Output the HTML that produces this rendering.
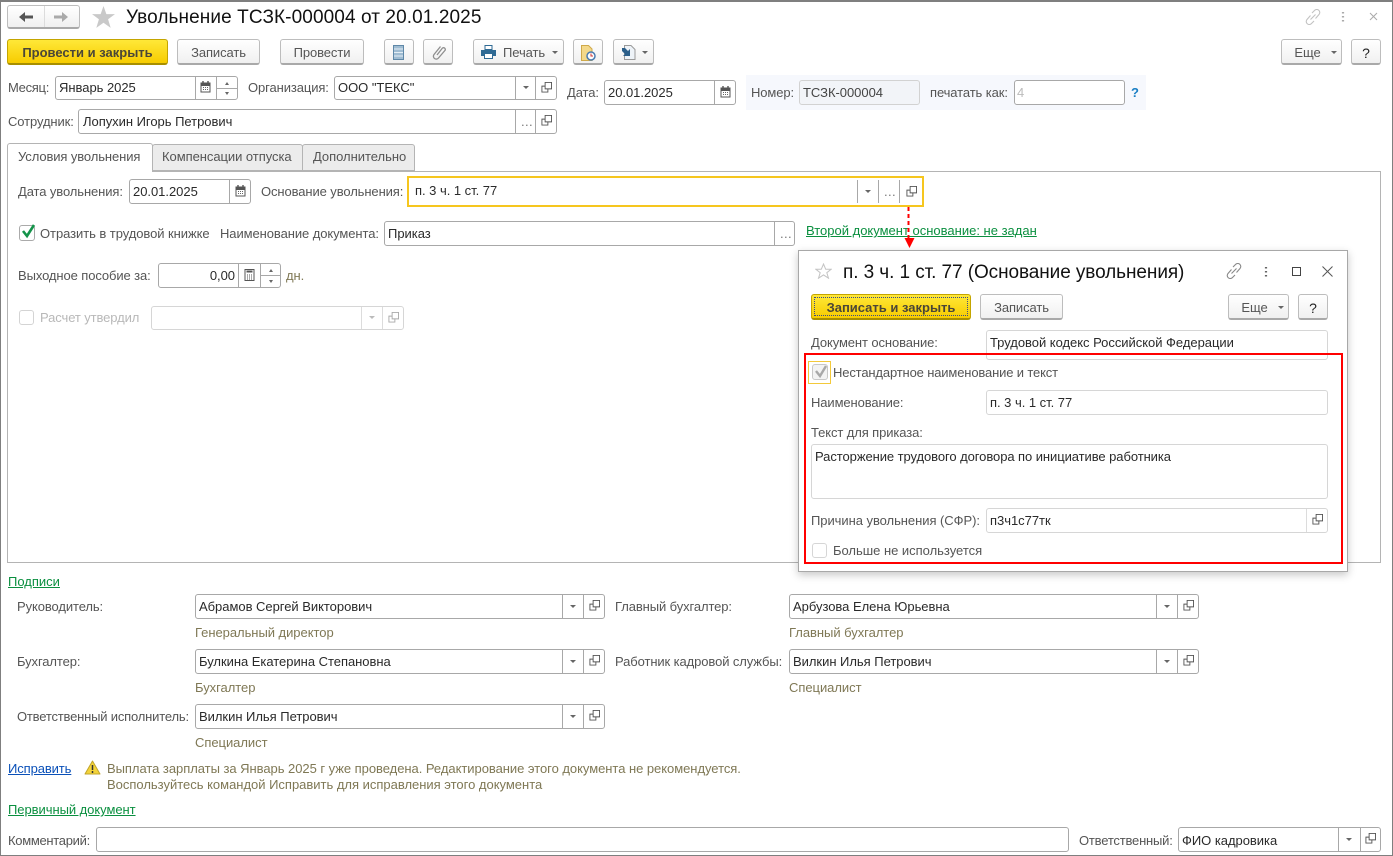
<!DOCTYPE html>
<html lang="ru"><head><meta charset="utf-8"><title>Увольнение ТСЗК-000004</title>
<style>
html,body{margin:0;padding:0;background:#fff}
#p{position:relative;width:1393px;height:856px;overflow:hidden;background:#fff;font:13px/16px "Liberation Sans","Noto Sans CJK SC",sans-serif;color:#333}
#p div,#p span,#p svg{position:absolute;box-sizing:border-box}
.t{white-space:nowrap;color:#555;margin-top:1px;letter-spacing:-.1px}
.x{white-space:nowrap;color:#2a2a2a;margin-top:1px;letter-spacing:-.03px}
.o{white-space:nowrap;color:#7f7855;margin-top:1px;letter-spacing:-.04px}
.g{white-space:nowrap;color:#0a8f3f;text-decoration:underline;margin-top:1px}
.f{background:#fff;border:1px solid #a8a8a8;border-radius:3px}
.r{background:#fff;border:1px solid #d6d6d6;border-radius:3px}
.v{width:1px;background:#a8a8a8}
.l{width:1px;background:#dcdcdc}
.a{width:0;height:0;margin-left:.5px;border-left:3px solid transparent;border-right:3px solid transparent;border-top:3px solid #666}
.s{border-left-width:2.5px;border-right-width:2.5px;border-top-width:3px}
.b{background:linear-gradient(#fff,#f0f0f0);border:1px solid #bdbdbd;border-bottom:2px solid #a9a9a9;border-radius:3px;text-align:center;color:#555;line-height:26px;white-space:nowrap;letter-spacing:-.1px}
.y{background:linear-gradient(#ffe838,#f7cc00);border:1px solid #c4a500;border-bottom:2px solid #a88f00;border-radius:3px;text-align:center;color:#4a4638;font-weight:bold;line-height:26px;white-space:nowrap}
.c{background:#fff;border:1px solid #c8c8c8;border-radius:3px}
.e{color:#777;letter-spacing:.4px}
</style></head><body><div id="p">
<svg width="0" height="0" style="left:0;top:0"><defs>
<symbol id="op" viewBox="0 0 12 12"><path d="M4.500.5h7v7h-7z" fill="none" stroke="#555"/><path d="M4.500 4.500h-3.500v6.500h6.500v-3.500" fill="none" stroke="#555"/></symbol>
<symbol id="cal" viewBox="0 0 11 12"><path d="M1 2h9v9H1z" fill="#fff" stroke="#555"/><path d="M1 2h9v3H1z" fill="#555"/><path d="M3 0v2M8 0v2" stroke="#555" stroke-width="1.4"/><path d="M3 6.500h1M5 6.500h1M7 6.500h1M3 8.500h1M5 8.500h1M7 8.500h1" stroke="#666"/></symbol>
<symbol id="calc" viewBox="0 0 11 12"><path d="M1 .5h9v11H1z" fill="#fff" stroke="#555"/><path d="M2.500 2.500h6" stroke="#555" stroke-width="2"/><path d="M3 6h1M5 6h1M7 6h1M3 8h1M5 8h1M7 8h1M3 10h1M5 10h1M7 10h1" stroke="#555"/></symbol>
<symbol id="star" viewBox="0 0 24 23"><path d="M12 0l3 8.500h9l-7.200 5.400 2.700 9L12 17.500 4.500 22.900l2.700-9L0 8.500h9z"/></symbol>
<symbol id="link" viewBox="0 0 16 16"><path d="M7 4l2.500-2.500a2.800 2.800 0 0 1 4.500 4L10.500 9.500M9 12l-2.500 2.500a2.800 2.800 0 0 1-4.500-4L5.500 6.500M5.500 10.500l5-5" fill="none" stroke="currentColor" stroke-width="1.100"/></symbol>
</defs></svg>

<!-- window frame -->
<div style="left:0;top:0;width:1393px;height:856px;border:1px solid #7f7f7f;border-width:2px 1px 1px 1px"></div>

<!-- header -->
<div class="b" style="left:7px;top:5px;width:73px;height:24px"></div>
<div class="l" style="left:44px;top:6px;height:21px"></div>
<svg style="left:19px;top:11px" width="15" height="12"><path d="M0 6l6-5v3.500h8v3H6V11z" fill="#555"/></svg>
<svg style="left:54px;top:11px" width="15" height="12"><path d="M14 6L8 1v3.500H0v3h8V11z" fill="#aaa"/></svg>
<svg style="left:92px;top:6px;color:#c9c9c9;fill:#c9c9c9" width="23" height="22"><use href="#star"/></svg>
<div class="x" style="left:126px;top:7px;margin-top:0;font-size:19px;line-height:22px;color:#111;letter-spacing:.1px">Увольнение ТСЗК-000004 от 20.01.2025</div>
<svg style="left:1305px;top:9px;color:#c2c2c2" width="16" height="16"><use href="#link"/></svg>
<svg style="left:1341px;top:11px" width="4" height="12"><path d="M2 1v1.500M2 5v1.500M2 9v1.500" stroke="#aaa" stroke-width="2.200"/></svg>
<svg style="left:1369px;top:12px" width="9" height="9"><path d="M1 1l7 7M8 1l-7 7" stroke="#aaa"/></svg>

<!-- command bar -->
<div class="y" style="left:7px;top:39px;width:161px;height:26px">Провести и закрыть</div>
<div class="b" style="left:177px;top:39px;width:83px;height:26px">Записать</div>
<div class="b" style="left:280px;top:39px;width:84px;height:26px">Провести</div>
<div class="b" style="left:384px;top:39px;width:30px;height:26px"></div>
<svg style="left:393px;top:45px" width="11" height="15"><path d="M.5.500h10v14H.500z" fill="#9fbcd2" stroke="#5f88a8"/><path d="M1 4h9M1 7.500h9M1 11h9" stroke="#e4eef5"/></svg>
<div class="b" style="left:423px;top:39px;width:30px;height:26px"></div>
<svg style="left:432px;top:45px" width="14" height="15"><path d="M5 10L10.500 3a1.800 1.800 0 0 1 2.600 2.300L6.500 13a2.800 2.800 0 0 1-4.500-3.500L8.500 1.500" fill="none" stroke="#8f8f8f" stroke-width="1.300"/></svg>
<div class="b" style="left:473px;top:39px;width:91px;height:26px;text-align:left;padding-left:29px">Печать</div>
<svg style="left:481px;top:45px" width="15" height="14"><path d="M4 .5h7v4H4z" fill="#fff" stroke="#2f6a94"/><path d="M0 5h15v6H0z" fill="#2f6a94"/><path d="M3.500 8.500h8v5h-8z" fill="#fff" stroke="#2f6a94"/></svg>
<div class="a" style="left:551px;top:51px"></div>
<div class="b" style="left:573px;top:39px;width:30px;height:26px"></div>
<svg style="left:581px;top:45px" width="15" height="16"><path d="M.5.500h7l3.500 3.500v11.500H.500z" fill="#f4d98a" stroke="#cfa94a"/><circle cx="10" cy="11" r="4" fill="#fff" stroke="#4a7bb0" stroke-width="1.500"/><path d="M10 8.500V11h2" stroke="#c33" fill="none"/></svg>
<div class="b" style="left:613px;top:39px;width:41px;height:26px"></div>
<svg style="left:621px;top:45px" width="15" height="15"><path d="M3.500.500h6.500l4 4v10h-10.500z" fill="#eef3f8" stroke="#9a9a9a"/><path d="M1 3h3l3 3 2-2v7H2l2-2-3-3z" fill="#2b5f8a"/></svg>
<div class="a" style="left:641px;top:51px"></div>
<div class="b" style="left:1281px;top:39px;width:61px;height:26px;padding-right:8px">Еще</div>
<div class="a" style="left:1330px;top:51px"></div>
<div class="b" style="left:1351px;top:39px;width:30px;height:26px;color:#222;font-size:14px">?</div>

<!-- row: month -->
<div class="t" style="left:8px;top:79px;letter-spacing:-.3px">Месяц:</div>
<div class="f" style="left:55px;top:76px;width:183px;height:24px"></div>
<div class="x" style="left:59px;top:79px">Январь 2025</div>
<div class="v" style="left:195px;top:77px;height:22px"></div><div class="v" style="left:216px;top:77px;height:22px"></div>
<svg style="left:200px;top:81px" width="11" height="12"><use href="#cal"/></svg>
<div style="left:217px;top:88px;width:20px;height:1px;background:#a8a8a8"></div>
<div class="a s" style="left:224px;top:82px;transform:scaleY(-1)"></div>
<div class="a s" style="left:224px;top:92px"></div>
<div class="t" style="left:248px;top:79px">Организация:</div>
<div class="f" style="left:334px;top:76px;width:223px;height:24px"></div>
<div class="x" style="left:338px;top:79px">ООО "ТЕКС"</div>
<div class="v" style="left:515px;top:77px;height:22px"></div><div class="v" style="left:535px;top:77px;height:22px"></div>
<div class="a" style="left:522px;top:86px"></div>
<svg style="left:541px;top:82px" width="11" height="11"><use href="#op"/></svg>
<div class="t" style="left:567px;top:84px">Дата:</div>
<div class="f" style="left:604px;top:80px;width:132px;height:25px"></div>
<div class="x" style="left:608px;top:84px">20.01.2025</div>
<div class="v" style="left:714px;top:81px;height:23px"></div>
<svg style="left:720px;top:86px" width="11" height="12"><use href="#cal"/></svg>
<div style="left:746px;top:75px;width:400px;height:35px;background:#f6f8fd"></div>
<div class="t" style="left:751px;top:84px">Номер:</div>
<div style="left:799px;top:80px;width:121px;height:25px;background:#f2f4f8;border:1px solid #d2d2d2;border-radius:3px"></div>
<div class="x" style="left:803px;top:84px;color:#444">ТСЗК-000004</div>
<div class="t" style="left:930px;top:84px">печатать как:</div>
<div class="f" style="left:1014px;top:80px;width:111px;height:25px"></div>
<div class="x" style="left:1017px;top:84px;color:#bbb">4</div>
<div class="x" style="left:1131px;top:84px;color:#1a7fc4;font-weight:bold">?</div>

<div class="t" style="left:8px;top:113px">Сотрудник:</div>
<div class="f" style="left:78px;top:109px;width:479px;height:25px"></div>
<div class="x" style="left:83px;top:113px">Лопухин Игорь Петрович</div>
<div class="v" style="left:515px;top:110px;height:23px"></div><div class="v" style="left:535px;top:110px;height:23px"></div>
<div class="t e" style="left:521px;top:113px">...</div>
<svg style="left:541px;top:115px" width="11" height="11"><use href="#op"/></svg>

<!-- tabs & panel -->
<div style="left:7px;top:171px;width:1374px;height:392px;border:1px solid #b4b4b4"></div>
<div style="left:152px;top:144px;width:151px;height:27px;background:#ececec;border:1px solid #b4b4b4;border-radius:3px 3px 0 0"></div>
<div style="left:302px;top:144px;width:113px;height:27px;background:#ececec;border:1px solid #b4b4b4;border-radius:3px 3px 0 0"></div>
<div style="left:7px;top:143px;width:146px;height:29px;background:#fff;border:1px solid #b4b4b4;border-bottom:0;border-radius:3px 3px 0 0"></div>
<div class="t" style="left:18px;top:148px">Условия увольнения</div>
<div class="t" style="left:162px;top:148px;letter-spacing:-.05px">Компенсации отпуска</div>
<div class="t" style="left:313px;top:148px;letter-spacing:-.03px">Дополнительно</div>

<div class="t" style="left:18px;top:183px">Дата увольнения:</div>
<div class="f" style="left:129px;top:179px;width:122px;height:25px"></div>
<div class="x" style="left:133px;top:183px">20.01.2025</div>
<div class="v" style="left:229px;top:180px;height:23px"></div>
<svg style="left:235px;top:185px" width="11" height="12"><use href="#cal"/></svg>
<div class="t" style="left:261px;top:183px">Основание увольнения:</div>
<div style="left:407px;top:176px;width:517px;height:31px;border:2px solid #f6c61e;background:#fff"></div>
<div class="x" style="left:415px;top:182px">п. 3 ч. 1 ст. 77</div>
<div class="v" style="left:857px;top:180px;height:23px"></div><div class="v" style="left:878px;top:180px;height:23px"></div><div class="v" style="left:899px;top:180px;height:23px"></div>
<div class="a" style="left:864px;top:190px"></div>
<div class="t e" style="left:884px;top:183px">...</div>
<svg style="left:906px;top:186px" width="11" height="11"><use href="#op"/></svg>

<div class="c" style="left:19px;top:225px;width:16px;height:16px;border-color:#aaa"></div>
<svg style="left:20px;top:224px" width="16" height="15"><path d="M3 7l4 5 7-11" fill="none" stroke="#14934a" stroke-width="2.600"/></svg>
<div class="t" style="left:40px;top:225px;letter-spacing:-.06px">Отразить в трудовой книжке</div>
<div class="t" style="left:220px;top:225px;letter-spacing:-.08px">Наименование документа:</div>
<div class="f" style="left:384px;top:221px;width:411px;height:25px"></div>
<div class="x" style="left:388px;top:225px">Приказ</div>
<div class="v" style="left:774px;top:222px;height:23px"></div>
<div class="t e" style="left:780px;top:225px">...</div>
<div class="g" style="left:806px;top:222px">Второй документ основание: не задан</div>

<div class="t" style="left:18px;top:268px;margin-top:0">Выходное пособие за:</div>
<div class="f" style="left:158px;top:263px;width:123px;height:25px"></div>
<div class="x" style="left:170px;top:268px;width:65px;text-align:right;margin-top:0">0,00</div>
<div class="v" style="left:238px;top:264px;height:23px"></div><div class="v" style="left:260px;top:264px;height:23px"></div>
<svg style="left:244px;top:269px" width="11" height="12"><use href="#calc"/></svg>
<div style="left:261px;top:275px;width:19px;height:1px;background:#a8a8a8"></div>
<div class="a s" style="left:268px;top:269px;transform:scaleY(-1)"></div>
<div class="a s" style="left:268px;top:280px"></div>
<div class="o" style="left:286px;top:268px;margin-top:0">дн.</div>

<div class="c" style="left:19px;top:310px;width:15px;height:15px;border-color:#d4d4d4"></div>
<div class="t" style="left:40px;top:310px;color:#b8b8b8;margin-top:0">Расчет утвердил</div>
<div class="r" style="left:151px;top:306px;width:253px;height:24px"></div>
<div class="l" style="left:361px;top:307px;height:22px"></div><div class="l" style="left:382px;top:307px;height:22px"></div>
<div class="a" style="left:368px;top:316px;border-top-color:#bbb"></div>
<svg style="left:388px;top:312px;opacity:.5" width="11" height="11"><use href="#op"/></svg>

<!-- bottom -->
<div class="g" style="left:8px;top:573px">Подписи</div>
<div class="t" style="left:17px;top:598px">Руководитель:</div>
<div class="f" style="left:195px;top:594px;width:410px;height:25px"></div>
<div class="x" style="left:199px;top:598px">Абрамов Сергей Викторович</div>
<div class="v" style="left:562px;top:595px;height:23px"></div><div class="v" style="left:583px;top:595px;height:23px"></div>
<div class="a" style="left:569px;top:605px"></div>
<svg style="left:589px;top:600px" width="11" height="11"><use href="#op"/></svg>
<div class="o" style="left:195px;top:624px">Генеральный директор</div>

<div class="t" style="left:17px;top:653px">Бухгалтер:</div>
<div class="f" style="left:195px;top:649px;width:410px;height:25px"></div>
<div class="x" style="left:199px;top:653px">Булкина Екатерина Степановна</div>
<div class="v" style="left:562px;top:650px;height:23px"></div><div class="v" style="left:583px;top:650px;height:23px"></div>
<div class="a" style="left:569px;top:660px"></div>
<svg style="left:589px;top:655px" width="11" height="11"><use href="#op"/></svg>
<div class="o" style="left:195px;top:679px">Бухгалтер</div>

<div class="t" style="left:17px;top:708px;letter-spacing:-.19px">Ответственный исполнитель:</div>
<div class="f" style="left:195px;top:704px;width:410px;height:25px"></div>
<div class="x" style="left:199px;top:708px">Вилкин Илья Петрович</div>
<div class="v" style="left:562px;top:705px;height:23px"></div><div class="v" style="left:583px;top:705px;height:23px"></div>
<div class="a" style="left:569px;top:715px"></div>
<svg style="left:589px;top:710px" width="11" height="11"><use href="#op"/></svg>
<div class="o" style="left:195px;top:734px">Специалист</div>

<div class="t" style="left:615px;top:598px">Главный бухгалтер:</div>
<div class="f" style="left:789px;top:594px;width:410px;height:25px"></div>
<div class="x" style="left:793px;top:598px">Арбузова Елена Юрьевна</div>
<div class="v" style="left:1156px;top:595px;height:23px"></div><div class="v" style="left:1177px;top:595px;height:23px"></div>
<div class="a" style="left:1163px;top:605px"></div>
<svg style="left:1183px;top:600px" width="11" height="11"><use href="#op"/></svg>
<div class="o" style="left:789px;top:624px">Главный бухгалтер</div>

<div class="t" style="left:615px;top:653px">Работник кадровой службы:</div>
<div class="f" style="left:789px;top:649px;width:410px;height:25px"></div>
<div class="x" style="left:793px;top:653px">Вилкин Илья Петрович</div>
<div class="v" style="left:1156px;top:650px;height:23px"></div><div class="v" style="left:1177px;top:650px;height:23px"></div>
<div class="a" style="left:1163px;top:660px"></div>
<svg style="left:1183px;top:655px" width="11" height="11"><use href="#op"/></svg>
<div class="o" style="left:789px;top:679px">Специалист</div>

<div class="g" style="left:8px;top:760px;color:#0a50b8;letter-spacing:-.1px">Исправить</div>
<svg style="left:84px;top:760px" width="17" height="15"><path d="M8.500 1L16 14H1z" fill="#f3d33a" stroke="#c2a52a" stroke-linejoin="round"/><path d="M8.500 5v5M8.500 11v2" stroke="#333" stroke-width="1.500"/></svg>
<div class="o" style="left:107px;top:760px">Выплата зарплаты за Январь 2025 г уже проведена. Редактирование этого документа не рекомендуется.</div>
<div class="o" style="left:107px;top:776px;letter-spacing:-.01px">Воспользуйтесь командой Исправить для исправления этого документа</div>
<div class="g" style="left:8px;top:801px;letter-spacing:-.05px">Первичный документ</div>

<div class="t" style="left:8px;top:832px;letter-spacing:-.3px">Комментарий:</div>
<div class="f" style="left:96px;top:827px;width:973px;height:25px"></div>
<div class="t" style="left:1079px;top:832px;letter-spacing:-.2px">Ответственный:</div>
<div class="f" style="left:1178px;top:827px;width:203px;height:25px"></div>
<div class="x" style="left:1182px;top:832px">ФИО кадровика</div>
<div class="v" style="left:1338px;top:828px;height:23px"></div><div class="v" style="left:1360px;top:828px;height:23px"></div>
<div class="a" style="left:1345px;top:838px"></div>
<svg style="left:1365px;top:833px" width="11" height="11"><use href="#op"/></svg>

<!-- dialog -->
<div style="left:798px;top:250px;width:550px;height:322px;background:#fff;border:1px solid #a8a8a8;box-shadow:0 3px 8px rgba(0,0,0,.22)"></div>
<svg style="left:815px;top:263px;color:#ccc" width="17" height="16"><path d="M8.500 1l2.200 5.200h5.500l-4.400 3.500 1.700 5.500-5-3.300-5 3.300 1.700-5.500L.800 6.200h5.500z" fill="#fff" stroke="#c4c4c4"/></svg>
<div class="x" style="left:843px;top:262px;margin-top:0;font-size:19px;line-height:22px;color:#111;letter-spacing:-.08px">п. 3 ч. 1 ст. 77 (Основание увольнения)</div>
<svg style="left:1226px;top:263px;color:#888" width="16" height="16"><use href="#link"/></svg>
<svg style="left:1264px;top:266px" width="4" height="12"><path d="M2 1v1.500M2 5v1.500M2 9v1.500" stroke="#666" stroke-width="2.200"/></svg>
<div style="left:1292px;top:267px;width:9px;height:9px;border:1px solid #444"></div>
<svg style="left:1322px;top:266px" width="11" height="11"><path d="M.5.500l10 10M10.500.500l-10 10" stroke="#555"/></svg>
<div class="y" style="left:811px;top:294px;width:160px;height:26px">Записать и закрыть</div>
<div style="left:814px;top:297px;width:154px;height:19px;border:1px dotted #3a4a8a"></div>
<div class="b" style="left:980px;top:294px;width:83px;height:26px">Записать</div>
<div class="b" style="left:1228px;top:294px;width:61px;height:26px;padding-right:8px">Еще</div>
<div class="a" style="left:1277px;top:306px"></div>
<div class="b" style="left:1298px;top:294px;width:30px;height:26px;color:#222;font-size:14px">?</div>

<div class="t" style="left:811px;top:334px">Документ основание:</div>
<div class="r" style="left:986px;top:330px;width:342px;height:30px"></div>
<div class="x" style="left:990px;top:334px">Трудовой кодекс Российской Федерации</div>

<div style="left:804px;top:353px;width:539px;height:211px;border:2px solid #f00"></div>
<div style="left:808px;top:361px;width:23px;height:23px;border:1px solid #f3c93a"></div>
<div class="c" style="left:812px;top:364px;width:16px;height:16px;background:#f3f3f3;border-color:#c8c8c8"></div>
<svg style="left:813px;top:364px" width="15" height="15"><path d="M3 7l4 5 6-10" fill="none" stroke="#a8a8a8" stroke-width="2.400"/></svg>
<div class="t" style="left:833px;top:364px;letter-spacing:-.15px">Нестандартное наименование и текст</div>
<div class="t" style="left:811px;top:394px">Наименование:</div>
<div class="r" style="left:986px;top:390px;width:342px;height:25px"></div>
<div class="x" style="left:990px;top:394px">п. 3 ч. 1 ст. 77</div>
<div class="t" style="left:811px;top:424px">Текст для приказа:</div>
<div class="r" style="left:811px;top:444px;width:517px;height:55px"></div>
<div class="x" style="left:815px;top:448px;letter-spacing:-.07px">Расторжение трудового договора по инициативе работника</div>
<div class="t" style="left:811px;top:512px;letter-spacing:-.05px">Причина увольнения (СФР):</div>
<div class="r" style="left:986px;top:508px;width:342px;height:25px"></div>
<div class="x" style="left:990px;top:512px">п3ч1с77тк</div>
<div class="l" style="left:1306px;top:509px;height:23px"></div>
<svg style="left:1312px;top:514px" width="11" height="11"><use href="#op"/></svg>
<div class="c" style="left:812px;top:543px;width:15px;height:15px;border-color:#d6d6d6"></div>
<div class="t" style="left:833px;top:542px;letter-spacing:-.02px">Больше не используется</div>

<!-- arrow -->
<svg style="left:900px;top:206px" width="20" height="44"><path d="M8.500 1v32" stroke="#f00" stroke-width="2" stroke-dasharray="4 3"/><path d="M4.500 32h10l-5 10z" fill="#f00"/></svg>
</div></body></html>
